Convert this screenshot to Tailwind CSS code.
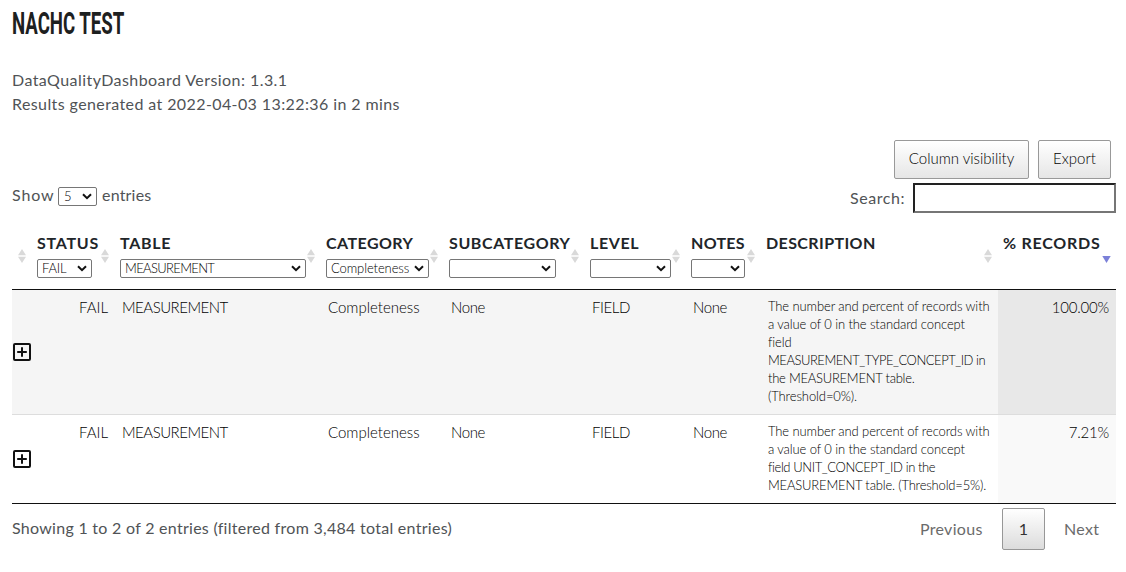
<!DOCTYPE html>
<html lang="en">
<head>
<meta charset="utf-8">
<title>NACHC TEST</title>
<script src="https://cdn.jsdelivr.net/npm/@tailwindcss/browser@4"></script>
</head>
<body class="bg-white font-['Lato','Open_Sans',sans-serif] text-base text-[#505356]">
<svg class="hidden">
  <symbol id="sort" viewBox="0 0 8 14"><path d="M4 0L8 6.3H0zM4 14L8 7.7H0z" fill="#d9d9d9"/></symbol>
  <symbol id="chev" viewBox="0 0 10 7"><path d="M1 1.2L5 5.2L9 1.2" fill="none" stroke="#111" stroke-width="2"/></symbol>
  <symbol id="plus" viewBox="0 0 18 18"><rect x="1" y="1" width="16" height="16" rx="1" fill="none" stroke="#111" stroke-width="2"/><path d="M9 4.2V13.8M4.2 9H13.8" stroke="#111" stroke-width="2"/></symbol>
</svg>
<main class="ml-3 w-[1104px] pt-1">
  <h1 class="h-9 origin-left scale-x-[0.582] whitespace-nowrap font-['Roboto',sans-serif] text-[32px] leading-[38px] font-bold text-[#1d2020]">NACHC TEST</h1>
  <div class="mt-7 leading-6">
    <p><span class="tracking-[0.44px]">DataQualityDashboard Version: 1.3.1</span></p>
    <p><span class="tracking-[0.4px]">Results generated at 2022-04-03 13:22:36 in 2 mins</span></p>
  </div>
  <div class="mt-6 flex justify-end gap-[9px] pr-[5px] text-[15px] text-black">
    <button class="h-[39px] w-[135px] rounded-xs border border-[#999] bg-linear-to-b from-white to-[#e6e6e6] pb-0.5 font-light">Column visibility</button>
    <button class="h-[39px] w-[73px] rounded-xs border border-[#999] bg-linear-to-b from-white to-[#e6e6e6] pb-0.5 font-light">Export</button>
  </div>
  <div class="mt-1 flex h-[30px] justify-between">
    <div class="flex h-[26px] items-center"><span class="-mt-0.5 w-[46px] tracking-[0.9px]">Show</span>
      <div class="mt-[1px] flex h-[19px] w-[39px] items-center justify-between rounded-xs border border-[#767676] pr-[4px] pl-[5px] text-[13px] font-light text-black"><span>5</span><svg class="h-[7px] w-[10px]"><use href="#chev"/></svg></div>
      <span class="-mt-0.5 ml-[5px] tracking-[0.2px]">entries</span></div>
    <label class="flex items-center"><span class="mr-2 tracking-[0.55px]">Search:</span><input class="h-[30px] w-[203px] border-2 border-t-[#222] border-r-[#767676] border-b-[#767676] border-l-[#222]"></label>
  </div>
  <table class="mt-[19px] w-[1104px] table-fixed border-separate border-spacing-0 text-left">
    <colgroup><col class="w-[20px]"><col class="w-[83px]"><col class="w-[206px]"><col class="w-[123px]"><col class="w-[141px]"><col class="w-[101px]"><col class="w-[75px]"><col class="w-[237px]"><col class="w-[118px]"></colgroup>
    <thead>
      <tr class="h-[58px] align-top leading-[22px] font-bold whitespace-nowrap text-[#212529]">
        <th class="relative border-b border-[#111]"><svg class="absolute top-[17px] right-[6px] h-[14px] w-2"><use href="#sort"/></svg></th>
        <th class="relative border-b border-[#111] pl-[5px]"><span class="tracking-[0.75px]">STATUS</span>
          <div class="mt-[5px] flex h-[19px] w-[55px] items-center justify-between rounded-xs border border-[#767676] pr-[4px] pl-1 text-[13px] font-light text-black"><span class="-mt-0.5 -tracking-[0.2px]">FAIL</span><svg class="h-[7px] w-[10px]"><use href="#chev"/></svg></div>
          <svg class="absolute top-[17px] right-[6px] h-[14px] w-2"><use href="#sort"/></svg></th>
        <th class="relative border-b border-[#111] pl-[5px]"><span class="tracking-[0.7px]">TABLE</span>
          <div class="mt-[5px] flex h-[19px] w-[186px] items-center justify-between rounded-xs border border-[#767676] pr-[4px] pl-1 text-[13px] font-light text-black"><span class="-mt-0.5 -tracking-[0.65px]">MEASUREMENT</span><svg class="h-[7px] w-[10px]"><use href="#chev"/></svg></div>
          <svg class="absolute top-[17px] right-[6px] h-[14px] w-2"><use href="#sort"/></svg></th>
        <th class="relative border-b border-[#111] pl-[5px]"><span class="tracking-[0.45px]">CATEGORY</span>
          <div class="mt-[5px] flex h-[19px] w-[103px] items-center justify-between rounded-xs border border-[#767676] pr-[4px] pl-1 text-[13px] font-light text-black"><span class="-mt-0.5 -tracking-[0.1px]">Completeness</span><svg class="h-[7px] w-[10px]"><use href="#chev"/></svg></div>
          <svg class="absolute top-[17px] right-[6px] h-[14px] w-2"><use href="#sort"/></svg></th>
        <th class="relative border-b border-[#111] pl-[5px]"><span class="tracking-[0.6px]">SUBCATEGORY</span>
          <div class="mt-[5px] flex h-[19px] w-[107px] items-center justify-end rounded-xs border border-[#767676] pr-[4px]"><svg class="h-[7px] w-[10px]"><use href="#chev"/></svg></div>
          <svg class="absolute top-[17px] right-[6px] h-[14px] w-2"><use href="#sort"/></svg></th>
        <th class="relative border-b border-[#111] pl-[5px]"><span class="tracking-[0.6px]">LEVEL</span>
          <div class="mt-[5px] flex h-[19px] w-[81px] items-center justify-end rounded-xs border border-[#767676] pr-[4px]"><svg class="h-[7px] w-[10px]"><use href="#chev"/></svg></div>
          <svg class="absolute top-[17px] right-[6px] h-[14px] w-2"><use href="#sort"/></svg></th>
        <th class="relative border-b border-[#111] pl-[5px]"><span class="tracking-[0.3px]">NOTES</span>
          <div class="mt-[5px] flex h-[19px] w-[54px] items-center justify-end rounded-xs border border-[#767676] pr-[4px]"><svg class="h-[7px] w-[10px]"><use href="#chev"/></svg></div>
          <svg class="absolute top-[17px] right-[6px] h-[14px] w-2"><use href="#sort"/></svg></th>
        <th class="relative border-b border-[#111] pl-[5px]"><span class="tracking-[0.4px]">DESCRIPTION</span>
          <svg class="absolute top-[17px] right-[6px] h-[14px] w-2"><use href="#sort"/></svg></th>
        <th class="relative border-b border-[#111] pl-[5px]"><span class="tracking-[0.75px]">% RECORDS</span>
          <svg class="absolute top-[24px] right-[5px] h-[7px] w-[9px]" viewBox="0 0 9 7"><path d="M0.3 0H8.7L4.5 7z" fill="#7b80d8"/></svg></th>
      </tr>
    </thead>
    <tbody class="align-top text-[15px] leading-5 font-light text-black">
      <tr class="h-[125px] bg-[#f5f5f5]">
        <td class="border-b border-[#ddd] pl-px align-middle"><svg class="h-[18px] w-[18px]"><use href="#plus"/></svg></td>
        <td class="border-b border-[#ddd] pt-[7px] pr-[7px] text-right">FAIL</td>
        <td class="border-b border-[#ddd] pt-[7px] pl-[7px]"><span class="-tracking-[0.5px]">MEASUREMENT</span></td>
        <td class="border-b border-[#ddd] pt-[7px] pl-[7px]">Completeness</td>
        <td class="border-b border-[#ddd] pt-[7px] pl-[7px] -tracking-[0.4px]">None</td>
        <td class="border-b border-[#ddd] pt-[7px] pl-[7px] -tracking-[0.4px]">FIELD</td>
        <td class="border-b border-[#ddd] pt-[7px] pl-[7px] -tracking-[0.4px]">None</td>
        <td class="border-b border-[#ddd] pt-[7px] pl-[7px] text-[13px] leading-[18px] -tracking-[0.1px] whitespace-nowrap">The number and percent of records with<br>a value of 0 in the standard concept<br>field<br><span class="-tracking-[0.47px]">MEASUREMENT_TYPE_CONCEPT_ID in</span><br><span class="-tracking-[0.25px]">the MEASUREMENT table.</span><br>(Threshold=0%).</td>
        <td class="border-b border-[#ddd] bg-[#e8e8e8] pt-[7px] pr-[7px] text-right -tracking-[0.2px]">100.00%</td>
      </tr>
      <tr class="h-[89px]">
        <td class="border-b border-[#111] pl-px align-middle"><svg class="h-[18px] w-[18px]"><use href="#plus"/></svg></td>
        <td class="border-b border-[#111] pt-[7px] pr-[7px] text-right">FAIL</td>
        <td class="border-b border-[#111] pt-[7px] pl-[7px]"><span class="-tracking-[0.5px]">MEASUREMENT</span></td>
        <td class="border-b border-[#111] pt-[7px] pl-[7px]">Completeness</td>
        <td class="border-b border-[#111] pt-[7px] pl-[7px] -tracking-[0.4px]">None</td>
        <td class="border-b border-[#111] pt-[7px] pl-[7px] -tracking-[0.4px]">FIELD</td>
        <td class="border-b border-[#111] pt-[7px] pl-[7px] -tracking-[0.4px]">None</td>
        <td class="border-b border-[#111] pt-[7px] pl-[7px] text-[13px] leading-[18px] -tracking-[0.1px] whitespace-nowrap">The number and percent of records with<br>a value of 0 in the standard concept<br><span class="-tracking-[0.4px]">field UNIT_CONCEPT_ID in the</span><br><span class="-tracking-[0.18px]">MEASUREMENT table. (Threshold=5%).</span></td>
        <td class="border-b border-[#111] bg-[#f9f9f9] pt-[7px] pr-[7px] text-right -tracking-[0.2px]">7.21%</td>
      </tr>
    </tbody>
  </table>
  <div class="mt-1 flex h-[42px] items-center justify-between">
    <span class="-mt-0.5 tracking-[0.28px]">Showing 1 to 2 of 2 entries (filtered from 3,484 total entries)</span>
    <div class="flex items-center text-[#6b6b6b]">
      <span class="w-[83px] pl-px tracking-[0.3px]">Previous</span>
      <span class="flex h-[42px] w-[43px] items-center justify-center rounded-xs border border-[#979797] bg-linear-to-b from-white to-[#dcdcdc] text-[#333]">1</span>
      <span class="w-[71px] pl-[19px] tracking-[0.3px]">Next</span>
    </div>
  </div>
</main>
</body>
</html>
